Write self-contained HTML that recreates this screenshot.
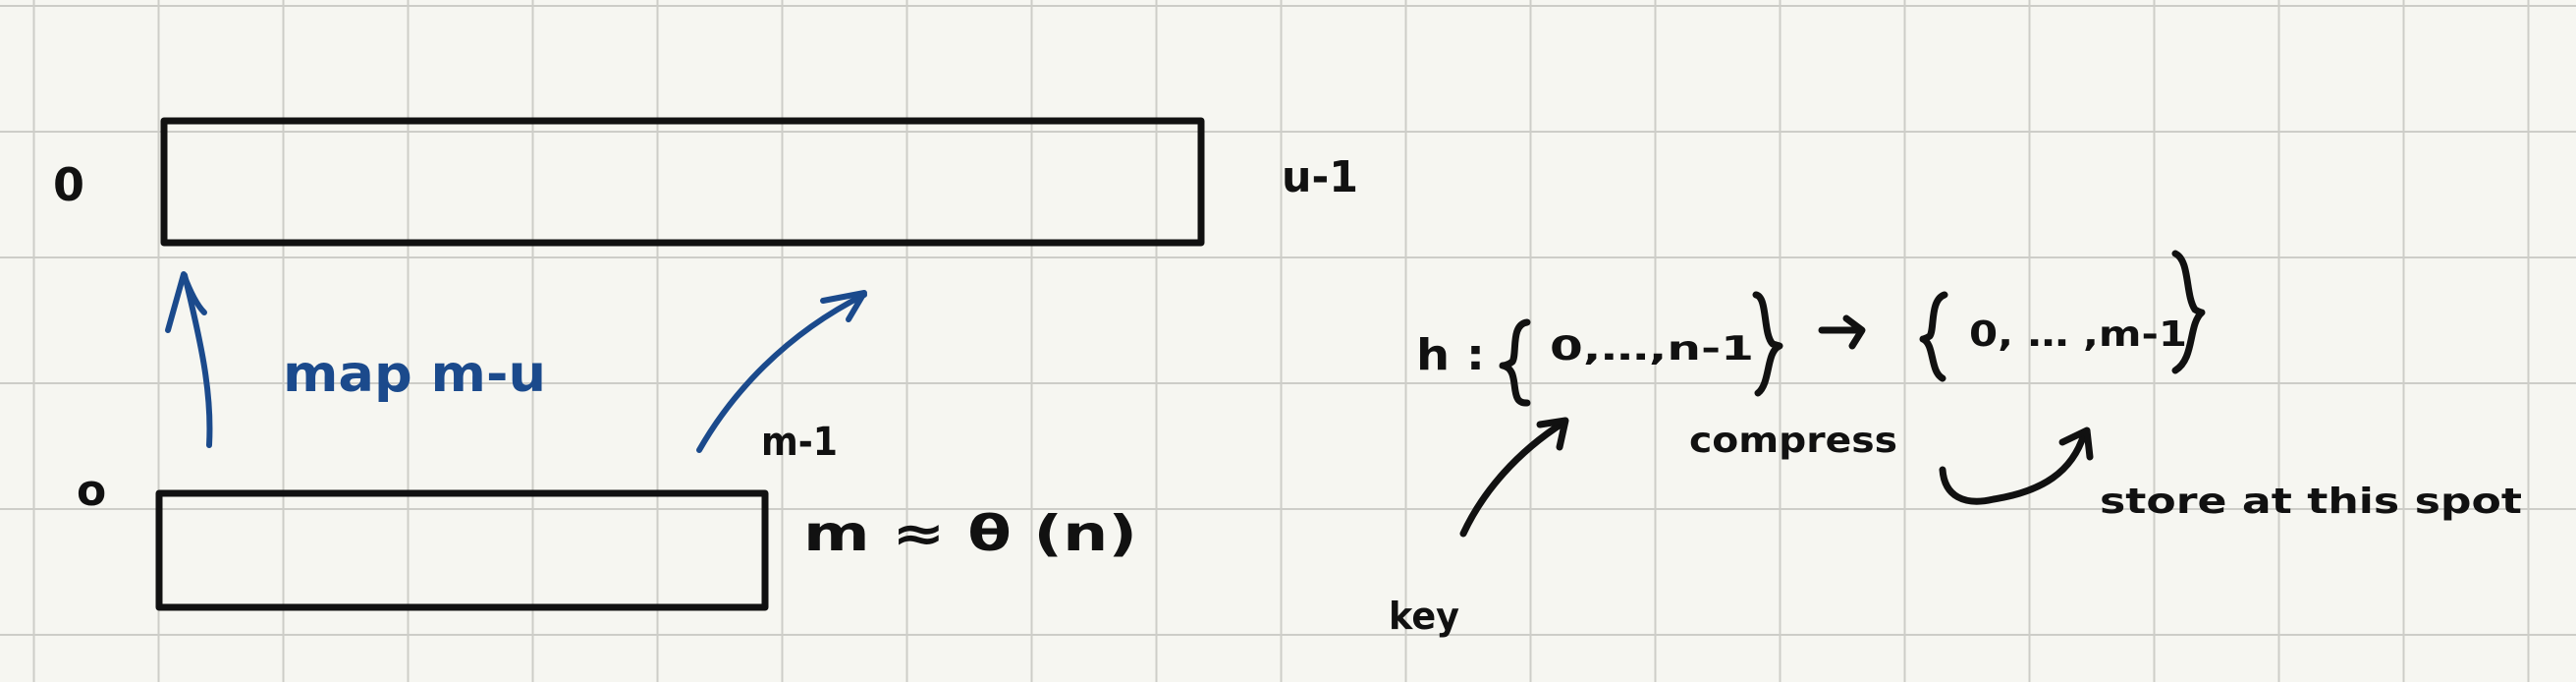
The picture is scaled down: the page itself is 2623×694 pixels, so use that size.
<!DOCTYPE html>
<html><head><meta charset="utf-8"><style>
html,body{margin:0;padding:0;background:#f6f6f1;}
svg{display:block}
text{font-family:"DejaVu Sans","Liberation Sans",sans-serif;font-weight:bold;}
</style></head><body>
<svg width="2623" height="694" viewBox="0 0 2623 694" xmlns="http://www.w3.org/2000/svg">
<defs>
<pattern id="g" x="33.5" y="5" width="127" height="128" patternUnits="userSpaceOnUse">
<path d="M0 0V128M0 0H127" stroke="#cdcdc8" stroke-width="4" fill="none"/>
</pattern>
</defs>
<rect width="2623" height="694" fill="#f6f6f1"/>
<rect width="2623" height="694" fill="url(#g)"/>
<g fill="none" stroke="#111" stroke-width="7" stroke-linecap="round" stroke-linejoin="round">
<rect x="167" y="123" width="1056" height="124"/>
<rect x="162" y="502" width="617" height="116"/>
<path d="M1490 543 C1510 500 1545 460 1592 430"/>
<path d="M1568 432 L1594 428 L1588 455"/>
<path d="M1978 478 C1980 505 2000 515 2030 508 C2080 500 2110 480 2122 442"/>
<path d="M2100 450 L2125 438 L2128 465"/>
<path d="M1855 336 L1895 336 M1880 324 L1896 336 L1886 352"/>
<path d="M1555 328 C1538 330 1545 360 1540 368 C1535 372 1530 372 1530 372 C1545 375 1540 395 1545 405 C1547 410 1552 410 1555 410"/>
<path d="M1788 300 C1800 302 1795 340 1805 350 C1812 352 1812 352 1812 352 C1798 358 1803 390 1790 400"/>
<path d="M1980 300 C1965 305 1970 335 1965 342 C1960 345 1958 345 1958 345 C1970 350 1965 378 1978 385"/>
<path d="M2215 258 C2230 265 2225 300 2235 315 C2240 318 2242 318 2242 318 C2228 330 2235 365 2215 377"/>
</g>
<g fill="none" stroke="#1b4a8c" stroke-width="6" stroke-linecap="round" stroke-linejoin="round">
<path d="M213 453 C216 400 205 350 188 280"/>
<path d="M171 336 L187 279 C193 295 200 310 208 318"/>
<path d="M712 458 C745 400 800 340 880 300"/>
<path d="M838 306 L880 298 L864 325"/>
</g>
<g fill="#111" font-size="40">
<text x="54" y="204" font-size="46">0</text>
<text x="1305" y="195" font-size="44" textLength="78" lengthAdjust="spacingAndGlyphs">u-1</text>
<text x="78" y="514" font-size="44">o</text>
<text x="775" y="463" textLength="78" lengthAdjust="spacingAndGlyphs">m-1</text>
<text x="818" y="560" font-size="50" textLength="340" lengthAdjust="spacingAndGlyphs">m ≈ θ (n)</text>
<text x="1442" y="376" font-size="44" textLength="70" lengthAdjust="spacingAndGlyphs">h :</text>
<text x="1578" y="366" font-size="34" textLength="208" lengthAdjust="spacingAndGlyphs">0,…,n-1</text>
<text x="2005" y="352" font-size="36" textLength="222" lengthAdjust="spacingAndGlyphs">0, … ,m-1</text>
<text x="1720" y="460" font-size="36" textLength="212" lengthAdjust="spacingAndGlyphs">compress</text>
<text x="1414" y="640" font-size="38" textLength="72" lengthAdjust="spacingAndGlyphs">key</text>
<text x="2138" y="522" font-size="36" textLength="430" lengthAdjust="spacingAndGlyphs">store at this spot</text>
</g>
<text x="288" y="398" font-size="52" fill="#1b4a8c" textLength="268" lengthAdjust="spacingAndGlyphs">map m-u</text>
</svg>
</body></html>
